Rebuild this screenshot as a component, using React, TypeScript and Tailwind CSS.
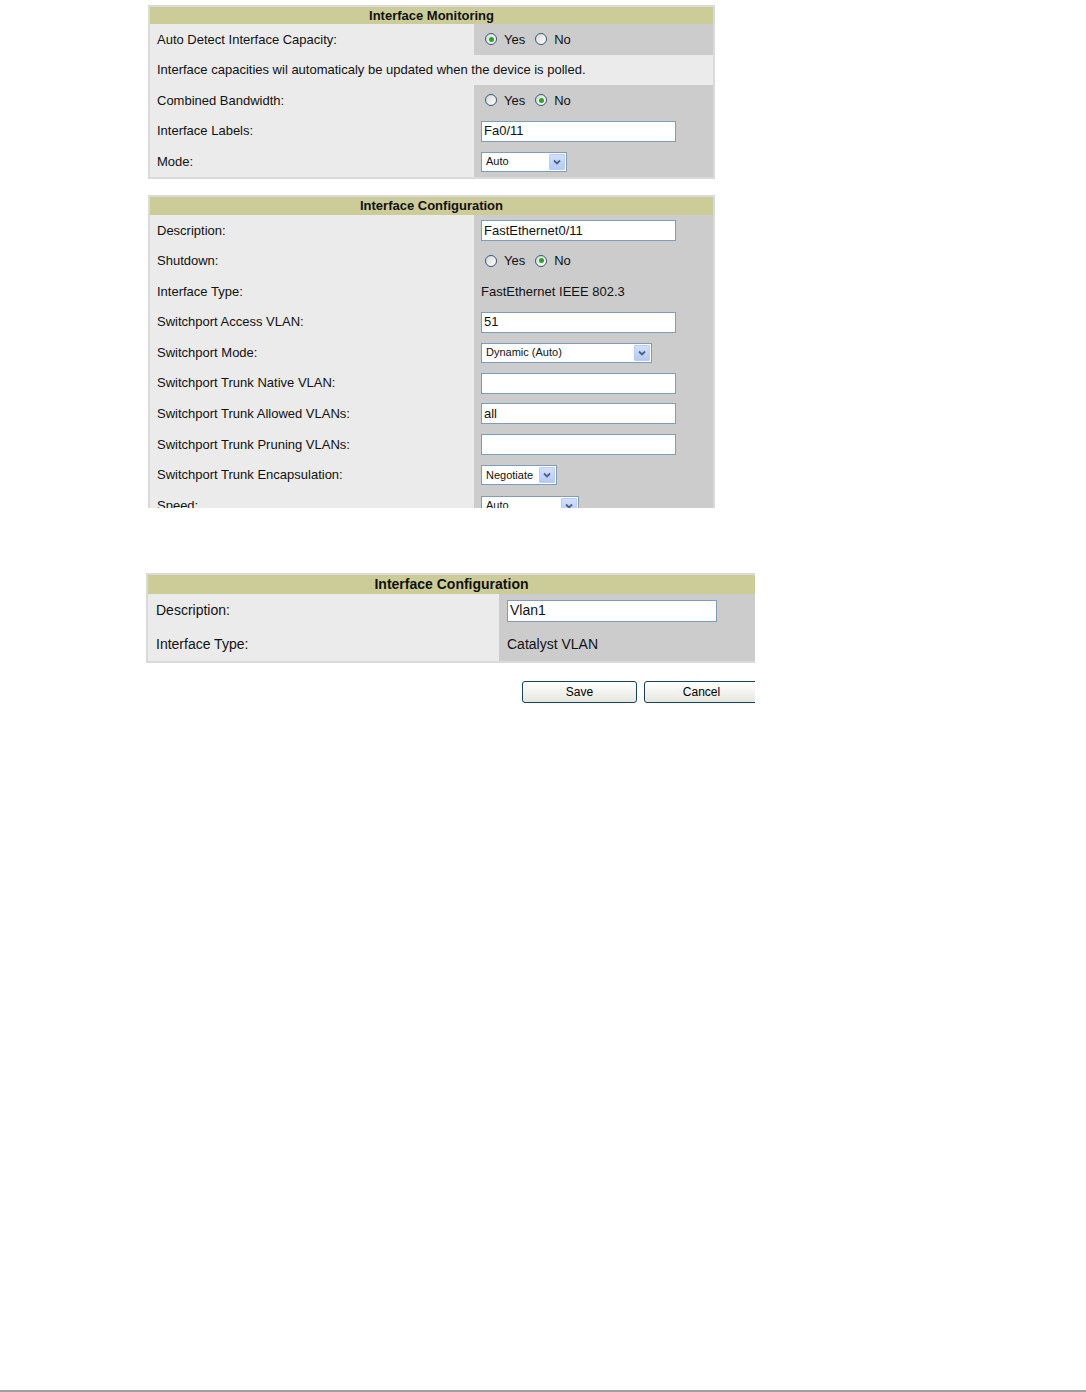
import React from 'react';

const font = { fontFamily: '"Liberation Sans", Arial, sans-serif' };

function Radio({ checked }: { checked?: boolean }) {
  return (
    <span className="flex h-[12px] w-[12px] items-center justify-center rounded-full border border-[#35597a] bg-linear-to-br from-[#d8d8d2] to-white">
      {checked && <span className="h-[5px] w-[5px] rounded-full bg-[#2aa52a]" />}
    </span>
  );
}

function YesNo({ yes }: { yes: boolean }) {
  return (
    <div className="ml-[4px] flex items-center text-[13px]">
      <Radio checked={yes} />
      <span className="ml-[7px]">Yes</span>
      <span className="ml-[10px]">
        <Radio checked={!yes} />
      </span>
      <span className="ml-[7px]">No</span>
    </div>
  );
}

function TextInput({ value, className = 'w-[195px] h-[21px] text-[13px]' }: { value?: string; className?: string }) {
  return (
    <div className={`flex items-center border border-[#7f9db9] bg-white pl-[2px] ${className}`}>
      {value}
    </div>
  );
}

function Select({ value, className }: { value: string; className: string }) {
  return (
    <div className={`flex h-[20px] items-center justify-between border border-[#7f9db9] bg-white pl-[4px] text-[11px] ${className}`}>
      <span>{value}</span>
      <span className="mr-[1px] flex h-[16px] w-[16px] items-center justify-center rounded-[1px] border border-[#bccdf5] bg-linear-to-b from-[#d3e0fd] to-[#b6c9f6]">
        <svg width="8" height="6" viewBox="0 0 8 6">
          <path d="M1 1.5 L4 4.5 L7 1.5" fill="none" stroke="#4d6185" strokeWidth="1.8" />
        </svg>
      </span>
    </div>
  );
}

function Row({ label, children, h = 'h-[30.6px]' }: { label: string; children?: React.ReactNode; h?: string }) {
  return (
    <div className={`grid grid-cols-[324px_1fr] ${h}`}>
      <div className="flex items-center bg-[#ebebeb] pl-[7px] text-[13px]">{label}</div>
      <div className="flex items-center bg-[#cccccc] pl-[7px] text-[13px]">{children}</div>
    </div>
  );
}

function Header({ title, h = 'h-[17px]' }: { title: string; h?: string }) {
  return (
    <div className={`flex items-center justify-center bg-[#cccc99] text-[13px] font-bold ${h}`}>{title}</div>
  );
}

export default function App() {
  return (
    <div className="flex min-h-[1392px] flex-col bg-white text-[#111]" style={font}>
      <div className="ml-[148px] mt-[5px] w-[567px] border-2 border-[#dadada]">
        <Header title="Interface Monitoring" />
        <Row label="Auto Detect Interface Capacity:">
          <YesNo yes />
        </Row>
        <div className="flex h-[30.6px] items-center bg-[#ebebeb] pl-[7px] text-[13px]">
          Interface capacities wil automaticaly be updated when the device is polled.
        </div>
        <Row label="Combined Bandwidth:">
          <YesNo yes={false} />
        </Row>
        <Row label="Interface Labels:">
          <TextInput value="Fa0/11" />
        </Row>
        <Row label="Mode:">
          <Select value="Auto" className="w-[86px]" />
        </Row>
      </div>

      <div className="ml-[148px] mt-[16px] h-[313px] w-[567px] overflow-hidden border-x-2 border-t-2 border-[#dadada]">
        <Header title="Interface Configuration" h="h-[18px]" />
        <Row label="Description:">
          <TextInput value="FastEthernet0/11" />
        </Row>
        <Row label="Shutdown:">
          <YesNo yes={false} />
        </Row>
        <Row label="Interface Type:">FastEthernet IEEE 802.3</Row>
        <Row label="Switchport Access VLAN:">
          <TextInput value="51" />
        </Row>
        <Row label="Switchport Mode:">
          <Select value="Dynamic (Auto)" className="w-[171px]" />
        </Row>
        <Row label="Switchport Trunk Native VLAN:">
          <TextInput />
        </Row>
        <Row label="Switchport Trunk Allowed VLANs:">
          <TextInput value="all" />
        </Row>
        <Row label="Switchport Trunk Pruning VLANs:">
          <TextInput />
        </Row>
        <Row label="Switchport Trunk Encapsulation:">
          <Select value="Negotiate" className="w-[76px]" />
        </Row>
        <Row label="Speed:">
          <Select value="Auto" className="w-[98px]" />
        </Row>
      </div>

      <div className="ml-[146px] mt-[65px] w-[609px] overflow-hidden">
        <div className="border-y-2 border-l-2 border-[#dadada]">
          <div className="flex h-[19px] items-center justify-center bg-[#cccc99] text-[14px] font-bold">
            Interface Configuration
          </div>
          <div className="grid h-[34px] grid-cols-[351px_1fr]">
            <div className="flex items-center bg-[#ebebeb] pl-[8px] text-[14px]">Description:</div>
            <div className="flex items-center bg-[#cccccc] pl-[8px]">
              <TextInput value="Vlan1" className="h-[22px] w-[210px] text-[14px]" />
            </div>
          </div>
          <div className="grid h-[33px] grid-cols-[351px_1fr]">
            <div className="flex items-center bg-[#ebebeb] pl-[8px] text-[14px]">Interface Type:</div>
            <div className="flex items-center bg-[#cccccc] pl-[8px] text-[14px]">Catalyst VLAN</div>
          </div>
        </div>
        <div className="mt-[18px] flex gap-[7px] pl-[376px]">
          <button className="h-[22px] w-[115px] shrink-0 rounded-[3px] border border-[#1c3f5e] bg-linear-to-b from-white to-[#e6e6e0] text-[12px] text-black">
            Save
          </button>
          <button className="h-[22px] w-[115px] shrink-0 rounded-[3px] border border-[#1c3f5e] bg-linear-to-b from-white to-[#e6e6e0] text-[12px] text-black">
            Cancel
          </button>
        </div>
      </div>

      <div className="mt-auto h-[2px] bg-[#a0a0a0]" />
    </div>
  );
}
